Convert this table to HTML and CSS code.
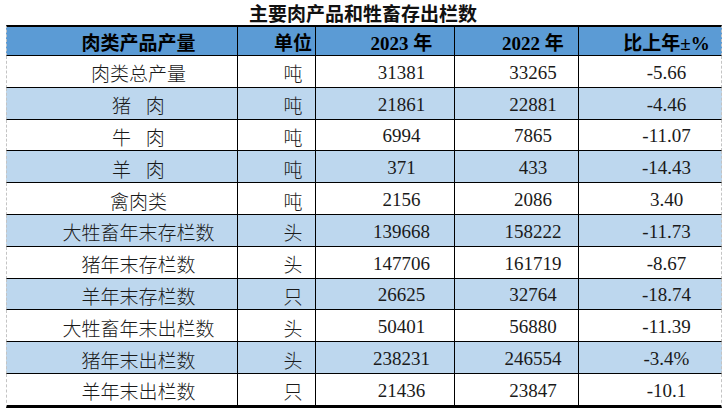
FILE: index.html
```html
<!DOCTYPE html>
<html lang="zh-CN">
<head>
<meta charset="utf-8">
<title>主要肉产品和牲畜存出栏数</title>
<link rel="stylesheet" href="styles.css">
</head>
<body>
<div class="page">
  <h1 class="title">主要肉产品和牲畜存出栏数</h1>
  <div class="table">
    <div class="row head">
      <div class="cell">肉类产品产量</div>
      <div class="cell">单位</div>
      <div class="cell">2023 年</div>
      <div class="cell">2022 年</div>
      <div class="cell">比上年±%</div>
    </div>
    <div class="row">
      <div class="cell name">肉类总产量</div><div class="cell">吨</div><div class="cell">31381</div><div class="cell">33265</div><div class="cell">-5.66</div>
    </div>
    <div class="row alt">
      <div class="cell name">猪 肉</div><div class="cell">吨</div><div class="cell">21861</div><div class="cell">22881</div><div class="cell">-4.46</div>
    </div>
    <div class="row">
      <div class="cell name">牛 肉</div><div class="cell">吨</div><div class="cell">6994</div><div class="cell">7865</div><div class="cell">-11.07</div>
    </div>
    <div class="row alt">
      <div class="cell name">羊 肉</div><div class="cell">吨</div><div class="cell">371</div><div class="cell">433</div><div class="cell">-14.43</div>
    </div>
    <div class="row">
      <div class="cell name">禽肉类</div><div class="cell">吨</div><div class="cell">2156</div><div class="cell">2086</div><div class="cell">3.40</div>
    </div>
    <div class="row alt">
      <div class="cell name">大牲畜年末存栏数</div><div class="cell">头</div><div class="cell">139668</div><div class="cell">158222</div><div class="cell">-11.73</div>
    </div>
    <div class="row">
      <div class="cell name">猪年末存栏数</div><div class="cell">头</div><div class="cell">147706</div><div class="cell">161719</div><div class="cell">-8.67</div>
    </div>
    <div class="row alt">
      <div class="cell name">羊年末存栏数</div><div class="cell">只</div><div class="cell">26625</div><div class="cell">32764</div><div class="cell">-18.74</div>
    </div>
    <div class="row">
      <div class="cell name">大牲畜年末出栏数</div><div class="cell">头</div><div class="cell">50401</div><div class="cell">56880</div><div class="cell">-11.39</div>
    </div>
    <div class="row alt">
      <div class="cell name">猪年末出栏数</div><div class="cell">头</div><div class="cell">238231</div><div class="cell">246554</div><div class="cell">-3.4%</div>
    </div>
    <div class="row last">
      <div class="cell name">羊年末出栏数</div><div class="cell">只</div><div class="cell">21436</div><div class="cell">23847</div><div class="cell">-10.1</div>
    </div>
  </div>
</div>
</body>
</html>
```
FILE: styles.css
```css
* { box-sizing: border-box; }
html, body { margin: 0; padding: 0; background: #ffffff; }
.page {
  width: 726px;
  height: 409px;
  overflow: hidden;
}
.title {
  margin: 0;
  height: 25px;
  line-height: 25px;
  text-align: center;
  font-family: "Noto Sans CJK SC", "Noto Sans", sans-serif;
  font-weight: 700;
  font-size: 19px;
  color: #111111;
}
.table {
  margin-left: 6px;
  width: 716px;
  font-family: "Liberation Serif", "Noto Sans CJK SC", serif;
  font-size: 19px;
  font-weight: 300;
  color: #1a1a1a;
}
.row {
  display: grid;
  grid-template-columns: 231px 78px 139px 124px 142px;
  height: 31.8px;
  border-left: 1px dashed #c4c4c4;
  border-right: 1px dashed #c4c4c4;
  border-bottom: 1px solid #000000;
  background: #ffffff;
}
.row.alt { background: #bdd7ee; }
.row.head {
  height: 31px;
  border-top: 2px solid #000000;
  background: #5b9bd5;
  font-weight: 700;
  color: #000000;
}
.row.last {
  height: 33.8px;
  border-bottom: 3px solid #000000;
}
.cell {
  display: flex;
  align-items: center;
  justify-content: center;
  padding-left: 33px;
  padding-top: 3px;
  border-right: 1px solid #000000;
  white-space: nowrap;
}
.cell:last-child { border-right: none; }
.head .cell { padding-top: 0; }
.name { word-spacing: 10px; }
```
